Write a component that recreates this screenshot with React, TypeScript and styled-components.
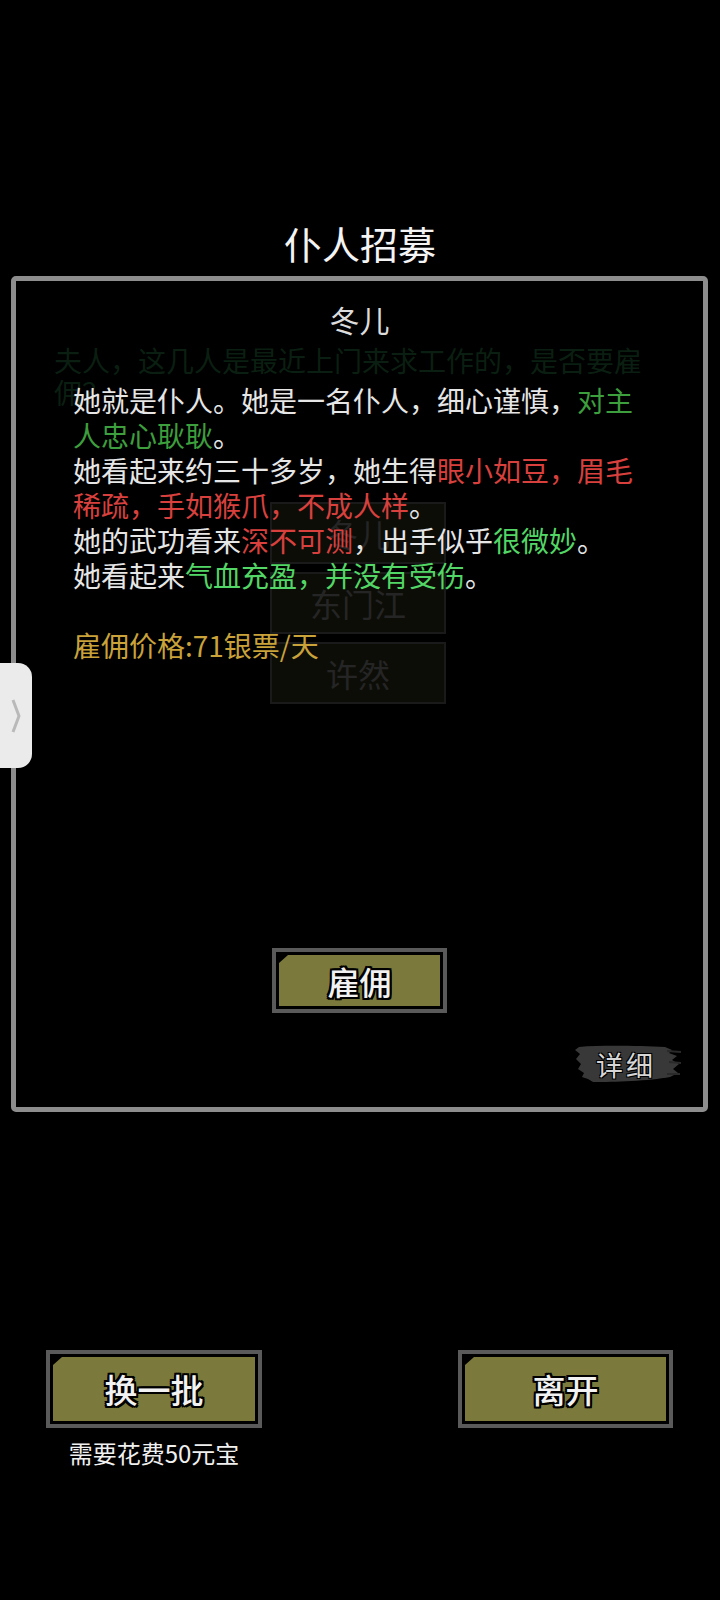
import styled, { createGlobalStyle } from "styled-components";

const GlobalStyle = createGlobalStyle`
  html, body {
    margin: 0;
    padding: 0;
    background: #000;
  }
  body {
    font-family: "Noto Sans CJK SC", "Noto Sans", sans-serif;
  }
`;

const Page = styled.div`
  position: relative;
  box-sizing: border-box;
  width: 720px;
  height: 1600px;
  padding-top: 218px;
  background: #000;
  overflow: hidden;
`;

const Title = styled.h1`
  margin: 0;
  height: 50px;
  line-height: 50px;
  font-size: 38px;
  font-weight: 400;
  text-align: center;
  color: #f4f4f4;
`;

const Panel = styled.section`
  position: relative;
  box-sizing: border-box;
  margin: 8px 12px 0 11px;
  height: 836px;
  border: 5px solid #8d8d8d;
  border-radius: 5px;
`;

/* the dimmed recruit list that sits beneath the detail popup */
const Underlay = styled.div`
  position: absolute;
  inset: 0;
  padding: 63px 0 0 38px;
`;

const FadedText = styled.p`
  margin: 0;
  width: 600px;
  font-size: 28px;
  line-height: 32px;
  color: #0a1f11;
`;

const DimList = styled.div`
  display: flex;
  flex-direction: column;
  gap: 8px;
  width: 176px;
  margin: 94px 0 0 216px;
`;

const DimItem = styled.div`
  box-sizing: border-box;
  height: 62px;
  border: 2px solid #1a1a1a;
  background: #0d0d08;
  display: flex;
  align-items: center;
  justify-content: center;
  font-size: 32px;
  color: #252525;
`;

const Detail = styled.div`
  position: relative;
  display: flex;
  flex-direction: column;
  align-items: center;
  height: 100%;
`;

const Name = styled.h2`
  margin: 18px 0 0;
  height: 40px;
  line-height: 40px;
  font-size: 30px;
  font-weight: 400;
  color: #dcdcdc;
`;

const Desc = styled.div`
  align-self: flex-start;
  width: 564px;
  margin: 44px 0 0 57px;
  font-size: 28px;
  line-height: 35px;
  color: #e6e6e6;
`;

const Sentence = styled.div``;

const Tone = styled.span<{ $tone: "good" | "bad" | "bright" }>`
  color: ${(p) =>
    p.$tone === "bad" ? "#d8403e" : p.$tone === "good" ? "#3d9e3d" : "#52d665"};
`;

const Price = styled.div`
  margin-top: 35px;
  color: #c9a23a;
`;

const GameButton = styled.button<{ $w: number; $h: number }>`
  box-sizing: border-box;
  width: ${(p) => p.$w}px;
  height: ${(p) => p.$h}px;
  padding: 3px;
  border: 4px solid #5a5a5a;
  background: #000;
  cursor: pointer;
  font-family: inherit;
`;

const ButtonFace = styled.span<{ $size: number }>`
  display: flex;
  align-items: center;
  justify-content: center;
  width: 100%;
  height: 100%;
  background: #7b7a3c;
  clip-path: polygon(9px 0, 100% 0, 100% 100%, 0 100%, 0 8px);
  font-size: ${(p) => p.$size}px;
  font-weight: 500;
  color: #f2f2f2;
  text-shadow:
    2px 0 0 #000, -2px 0 0 #000, 0 2px 0 #000, 0 -2px 0 #000,
    2px 2px 0 #000, -2px -2px 0 #000, 2px -2px 0 #000, -2px 2px 0 #000;
`;

const HireWrap = styled.div`
  margin-top: 285px;
`;

const MoreTag = styled.div`
  position: relative;
  align-self: flex-end;
  width: 112px;
  height: 40px;
  margin: 31px 22px 0 0;
  display: flex;
  align-items: center;
  justify-content: center;
  font-size: 27px;
  letter-spacing: 3px;
  color: #d6d6d6;
  text-shadow: 1px 1px 0 #000, -1px -1px 0 #000, 1px -1px 0 #000, -1px 1px 0 #000;

  svg {
    position: absolute;
    inset: 0;
  }
  span {
    position: relative;
    margin-left: 2px;
  }
`;

const BottomRow = styled.div`
  display: flex;
  justify-content: space-between;
  align-items: flex-start;
  margin-top: 238px;
  padding: 0 47px 0 46px;
`;

const Column = styled.div`
  display: flex;
  flex-direction: column;
  align-items: center;
`;

const Caption = styled.div`
  margin-top: 10px;
  font-size: 24px;
  line-height: 30px;
  color: #f0f0f0;
`;

const SideTab = styled.div`
  position: absolute;
  left: 0;
  top: 663px;
  width: 32px;
  height: 105px;
  background: #ebebeb;
  border-radius: 0 14px 14px 0;
  display: flex;
  align-items: center;
  justify-content: center;
`;

const Brush = () => (
  <svg width="112" height="40" viewBox="0 0 112 40">
    <path
      d="M10 3 C 35 1, 70 2, 96 3 L 103 6 L 100 9 L 108 12 L 103 16 L 110 20 L 104 25 L 109 29 L 101 33 C 80 37, 45 38, 24 38 L 19 35 L 13 33 L 15 29 L 9 25 L 12 20 L 7 15 L 11 10 L 6 6 Z"
      fill="#383838"
    />
    <path d="M98 7 L 112 8 M 100 18 L 112 19 M 98 30 L 111 30" stroke="#2a2a2a" strokeWidth="2" />
  </svg>
);

export default function App() {
  return (
    <Page>
      <GlobalStyle />
      <Title>仆人招募</Title>
      <Panel>
        <Underlay>
          <FadedText>夫人，这几人是最近上门来求工作的，是否要雇佣？</FadedText>
          <DimList>
            <DimItem>冬儿</DimItem>
            <DimItem>东门江</DimItem>
            <DimItem>许然</DimItem>
          </DimList>
        </Underlay>
        <Detail>
          <Name>冬儿</Name>
          <Desc>
            <Sentence>
              她就是仆人。她是一名仆人，细心谨慎，<Tone $tone="good">对主人忠心耿耿</Tone>。
            </Sentence>
            <Sentence>
              她看起来约三十多岁，她生得<Tone $tone="bad">眼小如豆，眉毛稀疏，手如猴爪，不成人样</Tone>。
            </Sentence>
            <Sentence>
              她的武功看来<Tone $tone="bad">深不可测</Tone>，出手似乎<Tone $tone="bright">很微妙</Tone>。
            </Sentence>
            <Sentence>
              她看起来<Tone $tone="bright">气血充盈，并没有受伤</Tone>。
            </Sentence>
            <Price>雇佣价格:71银票/天</Price>
          </Desc>
          <HireWrap>
            <GameButton $w={175} $h={65}>
              <ButtonFace $size={32}>雇佣</ButtonFace>
            </GameButton>
          </HireWrap>
          <MoreTag>
            <Brush />
            <span>详细</span>
          </MoreTag>
        </Detail>
      </Panel>
      <BottomRow>
        <Column>
          <GameButton $w={216} $h={78}>
            <ButtonFace $size={33}>换一批</ButtonFace>
          </GameButton>
          <Caption>需要花费50元宝</Caption>
        </Column>
        <GameButton $w={215} $h={78}>
          <ButtonFace $size={33}>离开</ButtonFace>
        </GameButton>
      </BottomRow>
      <SideTab>
        <svg width="12" height="36" viewBox="0 0 12 36">
          <polyline points="3,2 9,18 3,34" fill="none" stroke="#b9b9b9" strokeWidth="3" strokeLinejoin="round" />
        </svg>
      </SideTab>
    </Page>
  );
}
